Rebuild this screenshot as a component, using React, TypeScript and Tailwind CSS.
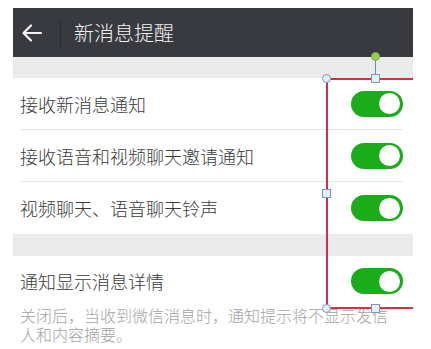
import React from "react";

const font = { fontFamily: '"Noto Sans CJK SC", "Noto Sans", sans-serif' };

function Toggle() {
  return (
    <div className="w-[52px] h-[26px] rounded-full bg-[#1aad19] flex items-center justify-end pr-[3px]">
      <div className="w-[21px] h-[21px] rounded-full bg-white" />
    </div>
  );
}

function Row({ label, last }: { label: string; last?: boolean }) {
  return (
    <div className={"h-[52px] ml-[7px] mr-[10px] flex items-center justify-between " + (last ? "" : "border-b border-[#e6e6e6]")}>
      <span className="text-[18px] text-[#3a3a3a] font-light leading-none">{label}</span>
      <Toggle />
    </div>
  );
}

const handle = "absolute w-[9px] h-[9px] bg-[#e4eef6] border border-[#7d9ab3]";

export default function App() {
  return (
    <div className="relative w-[431px] h-[349px] bg-white overflow-hidden" style={font}>
      <div className="w-[400px] ml-[13px] pt-[8px]">
        <header className="h-[49px] bg-[#393a3f] flex items-center">
          <svg width="22" height="20" viewBox="0 0 22 20" className="ml-[8px]">
            <path d="M20 10H3M10 2.5 2.5 10 10 17.5" stroke="#f2f2f2" strokeWidth="2.2" fill="none" strokeLinecap="round" strokeLinejoin="round" />
          </svg>
          <div className="w-px h-[28px] bg-[#2c2d31] ml-[17px]" />
          <h1 className="ml-[13px] text-[20px] text-[#f2f2f2] font-light leading-none">新消息提醒</h1>
        </header>
        <div className="h-[21px] bg-[#ebebeb]" />
        <Row label="接收新消息通知" />
        <Row label="接收语音和视频聊天邀请通知" />
        <Row label="视频聊天、语音聊天铃声" last />
        <div className="h-[22px] bg-[#ebebeb]" />
        <div className="h-[50px] ml-[7px] mr-[10px] flex items-center justify-between">
          <span className="text-[18px] text-[#3a3a3a] font-light leading-none">通知显示消息详情</span>
          <Toggle />
        </div>
        <p className="ml-[7px] w-[378px] text-[16px] font-light leading-[19px] text-[#a3a3a3]">
          关闭后，当收到微信消息时，通知提示将不显示发信人和内容摘要。
        </p>
      </div>

      {/* selection overlay */}
      <div className="absolute left-[326px] top-[78px] w-[87px] h-[231px] border-2 border-r-0 border-[#d03040]">
        <div className="absolute left-[47px] top-[-23px] w-px h-[21px] bg-[#6f8ba6]" />
        <div className="absolute left-[43px] top-[-28px] w-[9px] h-[9px] rounded-full bg-[#8fd14f] border border-[#7bb33d]" />
        <div className={handle + " rounded-full left-[-6px] top-[-6px]"} />
        <div className={handle + " left-[43px] top-[-6px]"} />
        <div className={handle + " left-[-6px] top-[109px]"} />
        <div className={handle + " rounded-full left-[-6px] bottom-[-6px]"} />
        <div className={handle + " left-[43px] bottom-[-6px]"} />
      </div>
    </div>
  );
}
